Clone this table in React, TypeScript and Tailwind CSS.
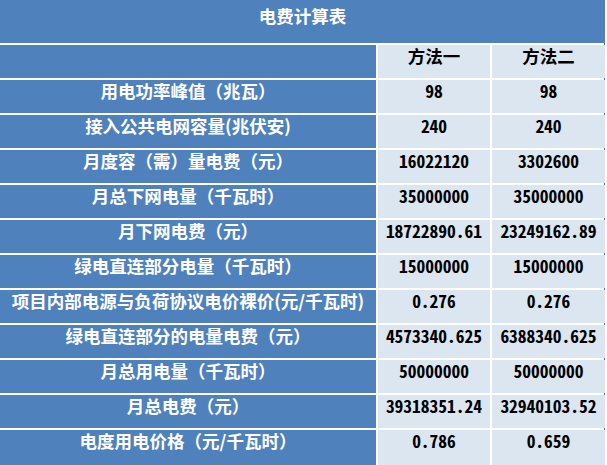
const rows: [string, string, string][] = [
  ['用电功率峰值（兆瓦）', '98', '98'],
  ['接入公共电网容量(兆伏安)', '240', '240'],
  ['月度容（需）量电费（元）', '16022120', '3302600'],
  ['月总下网电量（千瓦时）', '35000000', '35000000'],
  ['月下网电费（元）', '18722890.61', '23249162.89'],
  ['绿电直连部分电量（千瓦时）', '15000000', '15000000'],
  ['项目内部电源与负荷协议电价裸价(元/千瓦时)', '0.276', '0.276'],
  ['绿电直连部分的电量电费（元）', '4573340.625', '6388340.625'],
  ['月总用电量（千瓦时）', '50000000', '50000000'],
  ['月总电费（元）', '39318351.24', '32940103.52'],
  ['电度用电价格（元/千瓦时）', '0.786', '0.659'],
]

const font = "font-['Noto_Sans_CJK_SC',sans-serif] font-bold text-[17.5px] leading-[20px]"
const num = "[font-feature-settings:'hwid']"

export default function App() {
  return (
    <div className={`w-[607px] h-[465px] overflow-hidden bg-white ${font}`}>
      <div className="w-[605px] border-r border-[#4a6fa0]">
        <div className="grid grid-cols-[376px_112px_113px] gap-[2px] bg-white">
          <div className="col-span-3 h-[43px] bg-[#4f81bd] text-white text-center pt-[6px]">
            电费计算表
          </div>

          <div className="h-[33px] bg-[#4f81bd]" />
          <div className="h-[33px] bg-[#dce6f1] text-black text-center pt-[1px]">方法一</div>
          <div className="h-[33px] bg-[#dce6f1] text-black text-center pt-[1px]">方法二</div>

          {rows.map(([label, a, b], i) => {
            const h = i === rows.length - 1 ? 'h-[40px]' : 'h-[33px]'
            return (
              <div key={i} className="contents">
                <div className={`${h} bg-[#4f81bd] text-white text-center pt-[1px] whitespace-nowrap`}>
                  {label}
                </div>
                <div className={`${h} bg-[#dce6f1] text-black text-center pt-[1px] ${num}`}>{a}</div>
                <div className={`${h} bg-[#dce6f1] text-black text-center pt-[1px] ${num}`}>{b}</div>
              </div>
            )
          })}
        </div>
      </div>
    </div>
  )
}
